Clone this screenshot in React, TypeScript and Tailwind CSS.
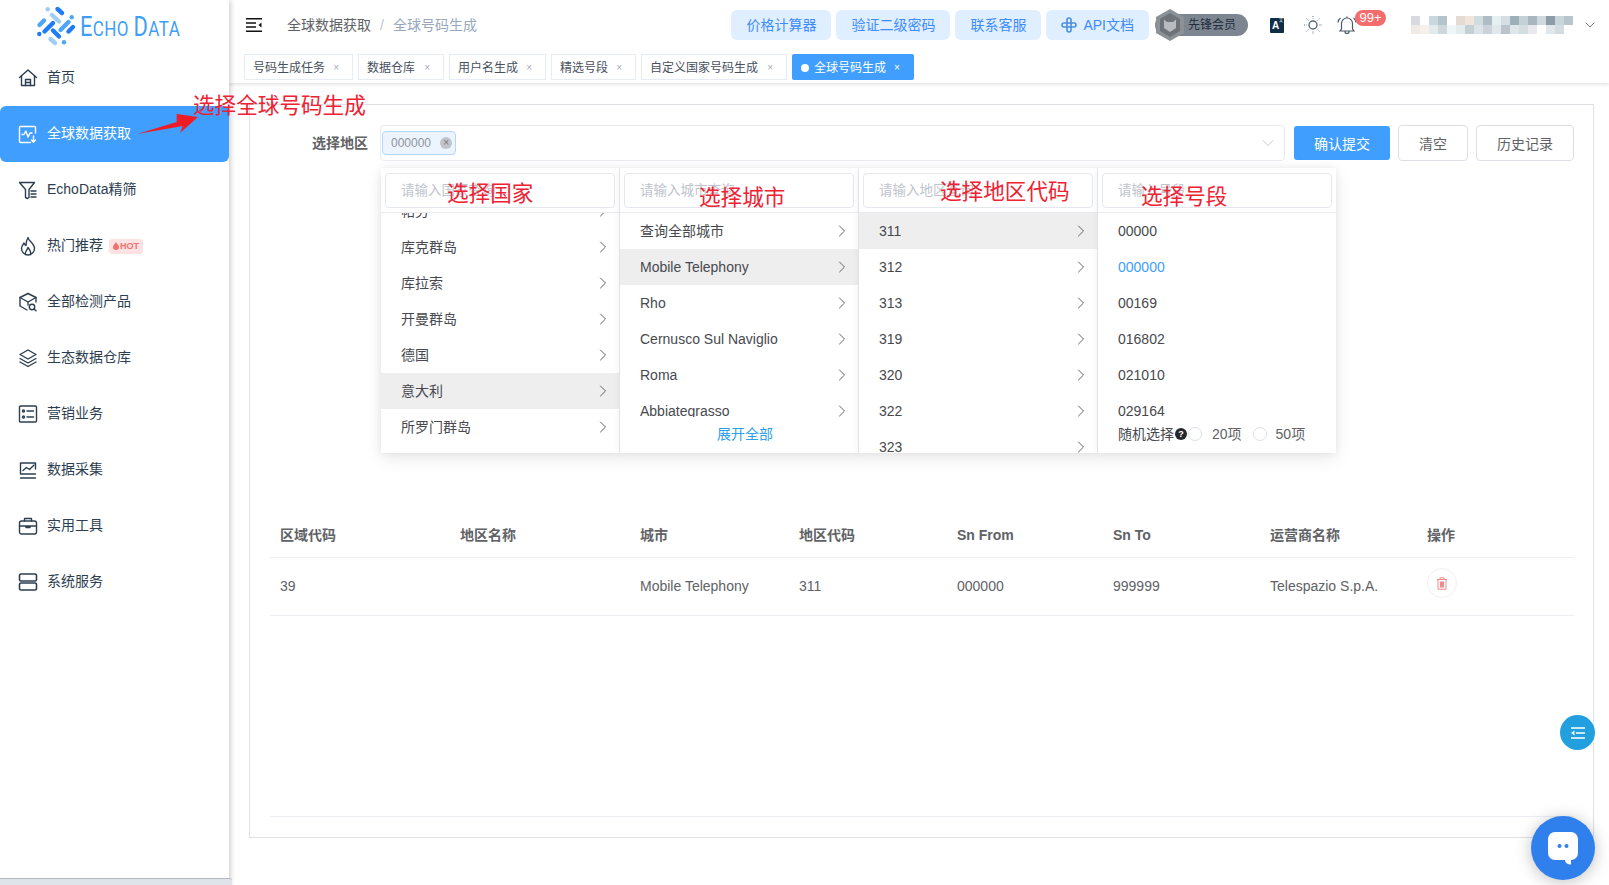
import React from "react";
import { ChevronRight, ChevronDown } from "lucide-react";

const Ico = ({ children }: { children: React.ReactNode }) => (
  <svg width="20" height="20" viewBox="0 0 20 20" fill="none" stroke="currentColor" strokeWidth="1.4" strokeLinecap="round" strokeLinejoin="round" className="shrink-0">
    {children}
  </svg>
);

const menu: { label: string; active?: boolean; hot?: boolean; icon: React.ReactNode }[] = [
  { label: "首页", icon: <Ico><path d="M1.5 9.5 10 2l8.5 7.5" /><path d="M3.5 8v9.5h13V8" /><path d="M7.5 17.5v-6h5v6" /><path d="M8 14.5h4" /></Ico> },
  { label: "全球数据获取", active: true, icon: <Ico><path d="M17.5 9V3.5a1 1 0 0 0-1-1h-14a1 1 0 0 0-1 1v14a1 1 0 0 0 1 1h10" /><path d="M4 10.5h2l1.8-3.5 2.2 6 2-4h2" /><path d="M15.5 12v6M13.5 16l2 2.2 2-2.2" /></Ico> },
  { label: "EchoData精筛", icon: <Ico><path d="M1.5 2.5h15l-5.5 7v8l-1.5 1-2-1v-8z" /><path d="M13 11h5M13 14h5M13 17h5" /></Ico> },
  { label: "热门推荐", hot: true, icon: <Ico><path d="M10 1.5c.5 3.5 6.5 6 6.5 11a6.5 6.5 0 0 1-13 0c0-2.500 1.500-4 2.500-5.500.5 1.500 1 2 2 2.500C8 7 8.500 4 10 1.500z" /><path d="M7.500 18.500c-1-3 2-4.500 2.500-7 1.500 2 3.500 4 2.500 7" /></Ico> },
  { label: "全部检测产品", icon: <Ico><path d="M10 1.500 2 5.500v8.500l7 4" /><path d="M18 10V5.500l-8-4" /><path d="M2 5.500 10 10l8-4.500M10 10v3" /><circle cx="14" cy="15" r="2.700" /><path d="m16 17 2 1.800" /></Ico> },
  { label: "生态数据仓库", icon: <Ico><path d="m10 2 8 4.500-8 4.500-8-4.500z" /><path d="m2 10.500 8 4.500 8-4.500" /><path d="m2 14 8 4.500 8-4.500" /></Ico> },
  { label: "营销业务", icon: <Ico><rect x="1.500" y="2" width="17" height="16" rx="1" /><circle cx="5.500" cy="7" r="1" /><circle cx="5.500" cy="13" r="1" /><path d="M9 7h6.500M9 13h6.500" /></Ico> },
  { label: "数据采集", icon: <Ico><path d="M17.500 9V3h-15v11h15" /><path d="M2.500 18h15" /><path d="m5 10.500 3.500-3 3 2L16 5" /></Ico> },
  { label: "实用工具", icon: <Ico><rect x="1.500" y="5" width="17" height="13" rx="2" /><path d="M6.500 5V2.500h7V5" /><path d="M1.500 10h17M8 10v1.500h4V10" /></Ico> },
  { label: "系统服务", icon: <Ico><rect x="1.500" y="2" width="17" height="7" rx="1.500" strokeWidth="1.600" /><rect x="1.500" y="11" width="17" height="7" rx="1.500" strokeWidth="1.600" /></Ico> },
];

const Logo = () => {
  const d = "#1f7cf5", m = "#4da6f7", l = "#9fcdf7";
  const bars: [number, number, number, number, string][] = [
    [57.5, 9, 62, 13, d], [52, 15, 59, 21.5, l], [60.5, 30, 68.5, 22, m], [68.5, 31.5, 73, 27, d],
    [39.5, 25, 44, 20.5, m], [44.5, 31.5, 53, 23, d], [53, 30.5, 59, 36.5, d], [50.5, 39, 55, 43, l],
  ];
  const dots: [number, number, string][] = [[47.7, 9.3, l], [71.7, 17.3, m], [39.3, 34, d], [64, 42.3, m]];
  return (
    <div className="relative h-[50px] shrink-0">
      <svg width="80" height="50" viewBox="0 0 80 50" className="block">
        {bars.map(([a, b, c, e, col], i) => <line key={i} x1={a} y1={b} x2={c} y2={e} stroke={col} strokeWidth="4.4" strokeLinecap="round" />)}
        {dots.map(([a, b, col], i) => <circle key={i} cx={a} cy={b} r="2.2" fill={col} />)}
      </svg>
      <div className="absolute left-[80px] top-[9px] origin-left scale-x-[0.81] whitespace-nowrap font-['Roboto',sans-serif] font-normal leading-[36px] text-[#3f9ff5] text-[21px] tracking-[0.5px]">
        <span className="text-[27px]">E</span>CHO <span className="text-[27px]">D</span>ATA
      </div>
    </div>
  );
};

const Sidebar = () => (
  <aside className="relative z-10 flex w-[229px] shrink-0 flex-col bg-white shadow-[2px_0_5px_rgba(0,0,0,0.18)]">
    <Logo />
    <nav className="flex flex-col">
      {menu.map((m) => (
        <div
          key={m.label}
          className={m.active
            ? "flex h-14 items-center gap-[9px] rounded-[6px] bg-[#409eff] pl-[18px] text-sm text-white"
            : "flex h-14 items-center gap-[9px] pl-[18px] text-sm text-[#2c3e50]"}
        >
          {m.icon}
          <span className="pb-[2px]">{m.label}</span>
          {m.hot && (
            <span className="-ml-[3px] flex h-[15px] items-center gap-[1px] rounded-[3px] bg-[#fde2e2] px-[4px] text-[9px] font-bold text-[#f47070]">
              <svg width="6" height="8" viewBox="0 0 6 8"><path d="M3 0c.5 2 3 3 3 5a3 3 0 0 1-6 0c0-2 2-3 3-5z" fill="#f47070" /></svg>
              HOT
            </span>
          )}
        </div>
      ))}
    </nav>
    <div className="mt-auto -mr-[3px] h-[7px] rounded-tr-[3px] border-t border-[#b5b9bf] bg-[#dfe3ea]" />
  </aside>
);

const topButtons = ["价格计算器", "验证二级密码", "联系客服"];
const mosaic = ["#d9d9e2", "#fff", "#c9d7df", "#b5c4cc", "#fff", "#e4dcd3", "#f2e5dc", "#cfdde0", "#aebcc4", "#e5f0f3", "#d4dfe3", "#9db0ba", "#c4d2d8", "#a9b6bf", "#cdd9dd", "#8d9ca6", "#c8d5da", "#b8c6cc"];

const Header = () => (
  <div className="flex h-[50px] items-center pl-[17px]">
    <svg width="16" height="14" viewBox="0 0 16 14" className="shrink-0">
      <path d="M0 .8h16M0 5h10M0 9h10M0 13.200h16" stroke="#111" strokeWidth="1.500" />
      <path d="M15.500 4.500v5L12.500 7z" fill="#111" />
    </svg>
    <div className="ml-[25px] flex items-center text-sm">
      <span className="text-[#606266]">全球数据获取</span>
      <span className="mx-[9px] text-[#c0c4cc]">/</span>
      <span className="text-[#97a8be]">全球号码生成</span>
    </div>
    <div className="ml-auto flex h-[30px] items-center gap-[5px] text-sm text-[#3d8bfd]">
      {topButtons.map((b) => (
        <div key={b} className="flex h-[30px] items-center rounded-[6px] bg-[#e0efff] px-[15px]">{b}</div>
      ))}
      <div className="flex h-[30px] items-center gap-[6px] rounded-[6px] bg-[#e0efff] px-[15px]">
        <svg width="16" height="16" viewBox="0 0 16 16" fill="none" stroke="#4a90e2" strokeWidth="1.600">
          <path d="M6 6V3a2 2 0 0 1 4 0v3M10 6h3a2 2 0 0 1 0 4h-3M10 10v3a2 2 0 0 1-4 0v-3M6 10H3a2 2 0 0 1 0-4h3" />
          <rect x="6" y="6" width="4" height="4" />
        </svg>
        API文档
      </div>
    </div>
    <div className="relative ml-[6px] flex h-[22px] w-[93px] items-center justify-end rounded-full bg-[#7d8690] pr-[12px] text-xs text-[#1f2d3d]">
      <span>先锋会员</span>
      <svg width="28" height="32" viewBox="0 0 28 32" className="absolute left-[1px] -top-[5px]">
        <path d="M14 0 28 8v16l-14 8-14-8V8z" fill="#8c9196" />
        <path d="M14 4 24 10v12l-10 6-10-6V10z" fill="#6d7379" />
        <path d="M8 10.500l3 2.500h6l3-2.500V19l-6 4-6-4z" fill="#b8bcc0" />
      </svg>
    </div>
    <div className="relative ml-[22px] flex h-[15px] w-[14px] items-center rounded-[1px] bg-[#0f2f47] pl-[2px] text-[10px] font-bold text-white">
      A
      <span className="absolute right-[1px] top-[1px] text-[4px] font-normal leading-none">文</span>
    </div>
    <svg width="20" height="20" viewBox="0 0 20 20" fill="none" stroke="#5b6b78" className="ml-[19px]">
      <circle cx="10" cy="10" r="4" strokeWidth="1.400" />
      <path d="M10 1v2.500M10 16.500V19M1 10h2.500M16.500 10H19M3.600 3.600l1.800 1.800M14.600 14.600l1.800 1.800M3.600 16.400l1.800-1.800M14.600 5.400l1.800-1.800" strokeWidth="1" strokeDasharray="1 1" />
    </svg>
    <div className="relative ml-[14px] h-[20px] w-[20px]">
      <svg width="20" height="20" viewBox="0 0 20 20" fill="none" stroke="#4a5a68" strokeWidth="1.200">
        <path d="M4.500 14V8.500a5.500 5.500 0 0 1 11 0V14l1.500 2H3zM8 16.500a2 2 0 0 0 4 0M10 1.500v1.500M1 7.500A6 6 0 0 1 3.500 3M19 7.500A6 6 0 0 0 16.500 3" />
      </svg>
      <span className="absolute left-[18px] -top-[5px] flex h-[16px] w-[31px] items-center justify-center rounded-full bg-[#f56c6c] text-[13px] text-white">99+</span>
    </div>
    <div className="ml-[54px] flex h-[18px] w-[168px] flex-wrap content-start overflow-hidden">
      {[0, 1].flatMap((r) => mosaic.map((c, i) => (
        <span key={`${r}${i}`} className="h-[9px] w-[9px]" style={{ backgroundColor: r ? mosaic[(i + 5) % mosaic.length] : c, opacity: r ? 0.6 : 1 }} />
      )))}
    </div>
    <ChevronDown className="ml-[3px] mr-[11px] shrink-0 text-[#606266]" size={16} strokeWidth={1.300} />
  </div>
);

const tagList: [string, string][] = [
  ["号码生成任务", "w-[109px]"],
  ["数据仓库", "w-[86px]"],
  ["用户名生成", "w-[97px]"],
  ["精选号段", "w-[85px]"],
  ["自定义国家号码生成", "w-[146px]"],
];

const Tags = () => (
  <div className="flex h-[33px] gap-[5px] pl-[15px] pt-[4px] shadow-[0_2px_3px_rgba(0,0,0,0.1)]">
    {tagList.map(([t, w]) => (
      <div key={t} className={`flex h-[26px] items-center justify-between border border-[#e6ebf5] pl-[8px] pr-[13px] pt-[1px] text-xs text-[#495060] ${w}`}>
        <span>{t}</span><span className="text-[10px] text-[#aab]">×</span>
      </div>
    ))}
    <div className="flex h-[26px] w-[122px] items-center rounded-[2px] bg-[#409eff] pl-[9px] pt-[1px] text-xs text-white">
      <span className="mr-[5px] h-[8px] w-[8px] rounded-full bg-white" />
      全球号码生成
      <span className="ml-[8px] text-[10px]">×</span>
    </div>
  </div>
);

const col1 = ["帕劳", "库克群岛", "库拉索", "开曼群岛", "德国", "意大利", "所罗门群岛"];
const col2 = ["查询全部城市", "Mobile Telephony", "Rho", "Cernusco Sul Naviglio", "Roma", "Abbiategrasso"];
const col3 = ["311", "312", "313", "319", "320", "322", "323"];
const col4 = ["00000", "000000", "00169", "016802", "021010", "029164"];

const Row = ({ text, on, arrow = true, blue }: { text: string; on?: boolean; arrow?: boolean; blue?: boolean }) => (
  <div className={`flex h-9 shrink-0 items-center justify-between pl-[20px] pr-[6px] text-sm ${on ? "bg-[#eeeeef]" : ""} ${blue ? "text-[#409eff]" : "text-[#47494e]"}`}>
    <span className="whitespace-nowrap">{text}</span>
    {arrow && <ChevronRight size={20} strokeWidth={1.000} className="text-[#444]" />}
  </div>
);

const Column = ({ ph, children, last }: { ph: string; children: React.ReactNode; last?: boolean }) => (
  <div className={`relative flex h-full shrink-0 flex-col bg-white shadow-[0_0_8px_rgba(0,0,0,0.07)] ${last ? "w-[238px]" : "w-[239px] border-r border-[#e9ebf1]"}`}>
    <div className="h-[45px] shrink-0 border-b border-[#e9ebf1] px-[4px] pt-[5px]">
      <input readOnly placeholder={ph} className="h-[35px] w-full rounded-[4px] border border-[#e4e7ed] pl-[15px] text-[13.500px] outline-none placeholder:text-[#c0c4cc]" />
    </div>
    <div className="relative flex min-h-0 flex-1 flex-col overflow-hidden">{children}</div>
  </div>
);

const Dropdown = () => (
  <div className="absolute left-[1px] top-[43px] z-20 flex h-[285px] bg-white shadow-[0_6px_16px_rgba(0,0,0,0.08)]">
    <Column ph="请输入国家查询">
      <div className="-mt-[20px] flex flex-col">
        {col1.map((t) => <Row key={t} text={t} on={t === "意大利"} />)}
      </div>
    </Column>
    <Column ph="请输入城市查询">
      {col2.map((t) => <Row key={t} text={t} on={t === "Mobile Telephony"} />)}
      <div className="absolute inset-x-0 bottom-0 flex h-[36px] items-center justify-center bg-white pb-[2px] pl-[12px] text-sm text-[#2ea0e8]">展开全部</div>
    </Column>
    <Column ph="请输入地区查询">
      {col3.map((t) => <Row key={t} text={t} on={t === "311"} />)}
    </Column>
    <Column ph="请输入号段" last>
      {col4.map((t) => <Row key={t} text={t} arrow={false} blue={t === "000000"} />)}
      <div className="absolute inset-x-0 bottom-0 flex h-[36px] items-center bg-white pb-[2px] pl-[20px] text-sm text-[#47494e]">
        随机选择
        <span className="ml-[1px] flex h-[12px] w-[12px] items-center justify-center rounded-full bg-[#26282c] text-[9px] font-bold text-white">?</span>
        <span className="ml-[1px] h-[14px] w-[14px] rounded-full border border-[#dcdfe6]" />
        <span className="ml-[10px] text-[#606266]">20项</span>
        <span className="ml-[11px] h-[14px] w-[14px] rounded-full border border-[#dcdfe6]" />
        <span className="ml-[9px] text-[#606266]">50项</span>
      </div>
    </Column>
  </div>
);

const cols = "grid grid-cols-[180px_180px_159px_158px_156px_157px_157px_1fr] pl-[10px]";
const heads = ["区域代码", "地区名称", "城市", "地区代码", "Sn From", "Sn To", "运营商名称", "操作"];
const cells = ["39", "", "Mobile Telephony", "311", "000000", "999999", "Telespazio S.p.A."];

const Content = () => (
  <div className="ml-[20px] mr-[15px] mt-[21px] h-[734px] border border-[#dfe1e6] pt-[20px]">
    <div className="flex items-center">
      <div className="w-[118px] text-right text-sm font-bold text-[#606266]">选择地区</div>
      <div className="relative ml-[12px] h-[36px] w-[905px]">
        <div className="flex h-full items-center rounded-[4px] border border-[#e9ebf1] pl-[1px]">
          <span className="flex h-[24px] w-[74px] items-center gap-[9px] rounded-[4px] border border-[#b3d8ff] bg-[#ecf5ff] pl-[8px] text-xs text-[#909399]">
            000000
            <span className="flex h-[12px] w-[12px] items-center justify-center rounded-full bg-[#c0c4cc] text-[10px] leading-none text-[#777]">×</span>
          </span>
          <ChevronDown size={20} strokeWidth={1.000} className="ml-auto mr-[6px] text-[#b8bcc4]" />
        </div>
        <Dropdown />
      </div>
      <div className="ml-[9px] flex h-[34px] w-[96px] items-center justify-center rounded-[3px] bg-[#409eff] pt-[1px] text-sm text-white">确认提交</div>
      <div className="ml-[8px] flex h-[36px] w-[70px] items-center justify-center rounded-[4px] border border-[#dcdfe6] pt-[1px] text-sm text-[#606266]">清空</div>
      <div className="ml-[8px] flex h-[36px] w-[98px] items-center justify-center rounded-[4px] border border-[#dcdfe6] pt-[1px] text-sm text-[#606266]">历史记录</div>
    </div>
    <div className="ml-[20px] mr-[19px] mt-[352px]">
      <div className={`${cols} h-[45px] items-center border-b border-[#ebeef5] text-sm font-bold text-[#606266]`}>
        {heads.map((h) => <div key={h}>{h}</div>)}
      </div>
      <div className={`${cols} h-[58px] items-center border-b border-[#ebeef5] pb-[2px] text-sm text-[#606266]`}>
        {cells.map((c, i) => <div key={i}>{c}</div>)}
        <div className="mb-[5px] flex h-[30px] w-[30px] items-center justify-center rounded-full border border-[#f0f0f2]">
          <svg width="12" height="13" viewBox="0 0 12 13" fill="none" stroke="#f08a8a" strokeWidth="1">
            <path d="M1 2.500h10M4 2.500V.8h4v1.700M2 2.500v9.700h8V2.500" />
            <rect x="4" y="4.500" width="4" height="6" fill="#f08a8a" stroke="none" />
          </svg>
        </div>
      </div>
      <div className="h-[201px] border-b border-[#ebeef5]" />
    </div>
  </div>
);

const Note = ({ cls, children }: { cls: string; children: string }) => (
  <div className={`pointer-events-none absolute z-30 whitespace-nowrap text-[21.600px] leading-[30px] text-[#ee2233] ${cls}`}>{children}</div>
);

export default function App() {
  return (
    <div className="relative flex h-[885px] w-[1609px] overflow-hidden bg-white font-['Liberation_Sans','Noto_Sans_CJK_SC',sans-serif]">
      <Sidebar />
      <main className="min-w-0 flex-1">
        <Header />
        <Tags />
        <Content />
      </main>

      <svg width="70" height="30" viewBox="0 0 70 30" className="absolute left-[135px] top-[110px] z-30">
        <path d="M2 24 41.700 12 41.700 4 63 7 45 23 47.700 16z" fill="#ee1c25" />
      </svg>
      <Note cls="left-[193px] top-[91px]">选择全球号码生成</Note>
      <Note cls="left-[447px] top-[179px]">选择国家</Note>
      <Note cls="left-[699px] top-[183px]">选择城市</Note>
      <Note cls="left-[940px] top-[177px]">选择地区代码</Note>
      <Note cls="left-[1141px] top-[182px]">选择号段</Note>

      <div className="absolute left-[1560px] top-[715px] z-30 flex h-[35px] w-[35px] items-center justify-center rounded-full bg-[#229fdf]">
        <svg width="14" height="12" viewBox="0 0 14 12"><path d="M0 1h14M5 6h9M0 11h14" stroke="#fff" strokeWidth="1.600" /><path d="M3.500 3.500v5L0 6z" fill="#fff" /></svg>
      </div>
      <div className="absolute left-[1531px] top-[816px] z-30 flex h-16 w-16 items-center justify-center rounded-full bg-[#2f80ed] shadow-[0_2px_16px_rgba(0,0,0,0.25)]">
        <svg width="32" height="34" viewBox="0 0 32 34">
          <path d="M8 1h16a7 7 0 0 1 7 7v14a7 7 0 0 1-7 7v4.500c-3 0-6-1.500-6-4.500H8a7 7 0 0 1-7-7V8a7 7 0 0 1 7-7z" fill="#fff" />
          <circle cx="12.500" cy="15" r="2" fill="#2f80ed" /><circle cx="19.500" cy="15" r="2" fill="#2f80ed" />
        </svg>
      </div>
    </div>
  );
}
